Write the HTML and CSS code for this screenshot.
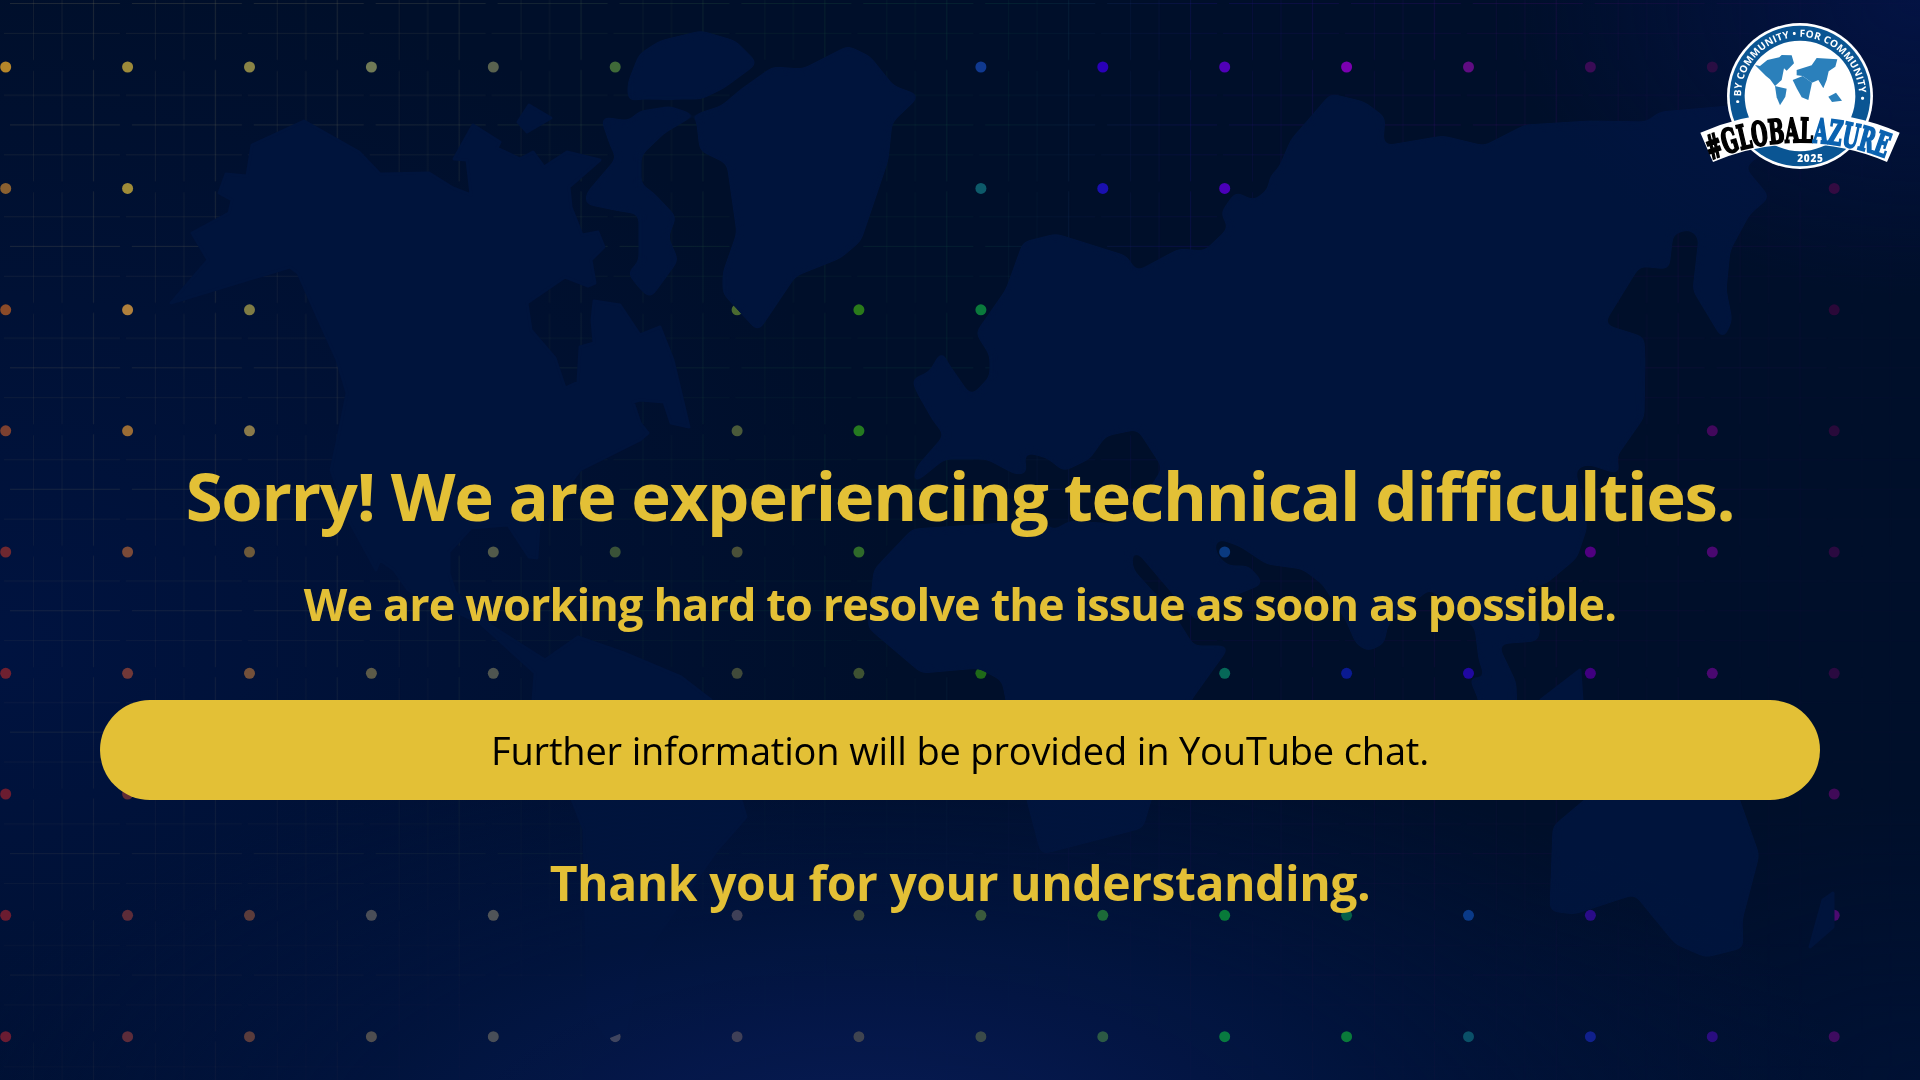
FILE: index.html
```html
<!DOCTYPE html>
<html lang="en">
<head>
<meta charset="utf-8">
<title>Technical difficulties</title>
<link rel="stylesheet" href="styles.css">
</head>
<body>
<main class="stage">
  <svg class="backdrop" viewBox="0 0 1920 1080" aria-hidden="true">
    <defs>
      <linearGradient id="gridTint" gradientUnits="userSpaceOnUse" x1="0" y1="0" x2="1920" y2="300">
        <stop offset="0" stop-color="#7d7a5c"/>
        <stop offset="0.2" stop-color="#6f6f5c"/>
        <stop offset="0.4" stop-color="#1d5a3c"/>
        <stop offset="0.52" stop-color="#0c5548"/>
        <stop offset="0.62" stop-color="#25109a"/>
        <stop offset="0.78" stop-color="#4d0a78"/>
        <stop offset="1" stop-color="#0a0a38"/>
      </linearGradient>
      <linearGradient id="gridFadeTint" gradientUnits="userSpaceOnUse" x1="0" y1="0" x2="0" y2="1080">
        <stop offset="0" stop-color="#fff"/>
        <stop offset="0.5" stop-color="#bbb"/>
        <stop offset="1" stop-color="#666"/>
      </linearGradient>
      <pattern id="gridTile" patternUnits="userSpaceOnUse" x="0" y="0" width="121.9" height="121.45">
        <g class="grid-lines">
          <path d="M33.5 0V60M33.5 71V121.45M62 0V60M62 71V121.45"/>
          <path class="strong" d="M93.5 0V60M93.5 70V121.45"/>
          <path d="M4 33.3H120M4 95.3H120"/>
          <path class="strong" d="M10 3.5H120"/>
        </g>
      </pattern>
      <mask id="gridMask" maskUnits="userSpaceOnUse" x="0" y="0" width="1920" height="1080">
        <rect width="1920" height="1080" fill="url(#gridTile)"/>
      </mask>
      <mask id="gridFade" maskUnits="userSpaceOnUse" x="0" y="0" width="1920" height="1080">
        <rect width="1920" height="1080" fill="url(#gridFadeTint)"/>
      </mask>
      <filter id="softCoast" x="0" y="0" width="1920" height="1080" filterUnits="userSpaceOnUse" color-interpolation-filters="sRGB">
        <feGaussianBlur stdDeviation="4"/>
        <feColorMatrix type="matrix" values="1 0 0 0 0  0 1 0 0 0  0 0 1 0 0  0 0 0 14 -6.5"/>
      </filter>
    </defs>

    <g mask="url(#gridFade)">
      <rect width="1920" height="1080" fill="url(#gridTint)" mask="url(#gridMask)"/>
    </g>

    <g class="dots">
      <circle cx="5.7" cy="67" fill="#b5862a"/><circle cx="127.6" cy="67" fill="#9c8a3a"/><circle cx="249.5" cy="67" fill="#8a8446"/><circle cx="371.4" cy="67" fill="#707a56"/><circle cx="493.3" cy="67" fill="#59624f"/><circle cx="615.2" cy="67" fill="#3f6a38"/><circle cx="980.9" cy="67" fill="#10398f"/><circle cx="1102.8" cy="67" fill="#2a00b8"/><circle cx="1224.7" cy="67" fill="#5000b8"/><circle cx="1346.6" cy="67" fill="#7a00b0"/><circle cx="1468.5" cy="67" fill="#5f0c82"/><circle cx="1590.4" cy="67" fill="#3a0a55"/><circle cx="1712.3" cy="67" fill="#2a0a40"/>

      <circle cx="5.7" cy="188.4" fill="#8a6030"/><circle cx="127.6" cy="188.4" fill="#a08c38"/><circle cx="737.1" cy="188.4" fill="#4a6a30"/><circle cx="980.9" cy="188.4" fill="#0d5a6a"/><circle cx="1102.8" cy="188.4" fill="#1a10b0"/><circle cx="1224.7" cy="188.4" fill="#4a00b8"/><circle cx="1834.2" cy="188.4" fill="#33083f"/>

      <circle cx="5.7" cy="309.8" fill="#8a4a28"/><circle cx="127.6" cy="309.8" fill="#b0803c"/><circle cx="249.5" cy="309.8" fill="#7f7c45"/><circle cx="737.1" cy="309.8" fill="#4a6a30"/><circle cx="858.9" cy="309.8" fill="#2a7a1a"/><circle cx="980.9" cy="309.8" fill="#0a7a3c"/><circle cx="1834.2" cy="309.8" fill="#2a0838"/>

      <circle cx="5.7" cy="430.8" fill="#7c4030"/><circle cx="127.6" cy="430.8" fill="#9a6c35"/><circle cx="249.5" cy="430.8" fill="#8a7a4a"/><circle cx="737.1" cy="430.8" fill="#4a5a3a"/><circle cx="858.9" cy="430.8" fill="#257a20"/><circle cx="1712.3" cy="430.8" fill="#42085c"/><circle cx="1834.2" cy="430.8" fill="#280a3a"/>

      <circle cx="5.7" cy="552" fill="#6f2830"/><circle cx="127.6" cy="552" fill="#7a4a38"/><circle cx="249.5" cy="552" fill="#6e5a3a"/><circle cx="371.4" cy="552" fill="#555a48"/><circle cx="493.3" cy="552" fill="#525a4a"/><circle cx="615.2" cy="552" fill="#3a5238"/><circle cx="737.1" cy="552" fill="#4a5038"/><circle cx="858.9" cy="552" fill="#2f6a2a"/><circle cx="1224.7" cy="552" fill="#0a3a80"/><circle cx="1590.4" cy="552" fill="#500080"/><circle cx="1712.3" cy="552" fill="#4a0870"/><circle cx="1834.2" cy="552" fill="#2a0a40"/>

      <circle cx="5.7" cy="673.3" fill="#6f2030"/><circle cx="127.6" cy="673.3" fill="#703838"/><circle cx="249.5" cy="673.3" fill="#73503a"/><circle cx="371.4" cy="673.3" fill="#5c5a48"/><circle cx="493.3" cy="673.3" fill="#4f5550"/><circle cx="737.1" cy="673.3" fill="#404a3a"/><circle cx="858.9" cy="673.3" fill="#3e5232"/><circle cx="980.9" cy="673.3" fill="#1f6a18"/><circle cx="1224.7" cy="673.3" fill="#066858"/><circle cx="1346.6" cy="673.3" fill="#0a1a90"/><circle cx="1468.5" cy="673.3" fill="#2008a0"/><circle cx="1590.4" cy="673.3" fill="#400080"/><circle cx="1712.3" cy="673.3" fill="#4a0870"/><circle cx="1834.2" cy="673.3" fill="#2a0a40"/>

      <circle cx="5.7" cy="794" fill="#6a1c30"/><circle cx="127.6" cy="794" fill="#602c35"/><circle cx="1834.2" cy="794" fill="#400a58"/>

      <circle cx="5.7" cy="915.3" fill="#6a1c30"/><circle cx="127.6" cy="915.3" fill="#5c2c38"/><circle cx="249.5" cy="915.3" fill="#5c3c3a"/><circle cx="371.4" cy="915.3" fill="#4a4e58"/><circle cx="493.3" cy="915.3" fill="#505458"/><circle cx="737.1" cy="915.3" fill="#3f4058"/><circle cx="858.9" cy="915.3" fill="#3e4a40"/><circle cx="980.9" cy="915.3" fill="#3a5a30"/><circle cx="1102.8" cy="915.3" fill="#1c6a20"/><circle cx="1224.7" cy="915.3" fill="#087a30"/><circle cx="1346.6" cy="915.3" fill="#06604a"/><circle cx="1468.5" cy="915.3" fill="#0a3a88"/><circle cx="1590.4" cy="915.3" fill="#2a0a88"/><circle cx="1834.2" cy="915.3" fill="#4a0870"/>

      <circle cx="5.7" cy="1036.7" fill="#6a1c30"/><circle cx="127.6" cy="1036.7" fill="#5c2c38"/><circle cx="249.5" cy="1036.7" fill="#5a3c3a"/><circle cx="371.4" cy="1036.7" fill="#4f4e50"/><circle cx="493.3" cy="1036.7" fill="#484e58"/><circle cx="615.2" cy="1036.7" fill="#3f4560"/><circle cx="737.1" cy="1036.7" fill="#3f4058"/><circle cx="858.9" cy="1036.7" fill="#3f4450"/><circle cx="980.9" cy="1036.7" fill="#3a4a40"/><circle cx="1102.8" cy="1036.7" fill="#2c5a2c"/><circle cx="1224.7" cy="1036.7" fill="#087a2a"/><circle cx="1346.6" cy="1036.7" fill="#0a7a20"/><circle cx="1468.5" cy="1036.7" fill="#0a5068"/><circle cx="1590.4" cy="1036.7" fill="#10208c"/><circle cx="1712.3" cy="1036.7" fill="#2a0880"/><circle cx="1834.2" cy="1036.7" fill="#3e0860"/>
    </g>

    <g class="land">
      <path d="M171 303L208 260L192 233L229 213L232 200L219 193L226 174L247 176L252 145L304 121L359 152L380 174L429 173L453 188L471 195L467 160L454 159L473 125L500 142L497 148L520 159L533 152L544 167L567 152L600 160L569 187L571 207L582 235L598 232L604 247L591 260L595 283L588 286L565 277L527 303L531 330L555 358L565 388L578 382L580 347L594 343L592 320L594 301L620 305L640 335L660 327L673 360L689 427L671 423L664 402L640 400L633 402L640 423L648 433L640 440L580 470L539 525L537 558L529 557L508 525L471 528L449 552L449 573L455 592L490 625L545 660L578 637L624 653L681 677L711 700L746 817L717 850L640 960L625 1030L608 1037L588 1010L584 830L533 700L535 673L480 623L408 590L394 570L380 560L376 570L369 557L347 517L331 470L339 433L347 393L337 360L322 327L298 273L290 267Z"/>
      <path d="M529 105L551 118L527 132L518 122Z"/>
      <g filter="url(#softCoast)">
        <path d="M640 55L660 42L701 32L735 42L756 63L722 88L701 98L640 98L629 100L629 83Z"/>
        <path d="M602 118L629 122L640 112L670 108L693 115L664 132L640 155L640 185L652 193L675 217L667 237L677 260L650 297L640 287L629 273L640 262L640 213L620 210L586 203L588 193L618 158L612 147Z"/>
        <path d="M697 115L722 107L742 90L773 68L803 70L848 47L869 57L893 87L918 96L891 122L887 160L860 240L840 257L795 275L758 330L724 293L724 273L738 233L728 163L701 150Z"/>
        <path d="M942 352L946 362L971 398L991 377L991 355L977 333L1007 290L1024 243L1056 235L1126 257L1136 273L1179 250L1205 252L1230 228L1222 213L1236 193L1254 202L1269 190L1271 177L1280 168L1292 140L1307 123L1331 95L1364 103L1384 118L1382 143L1384 147L1443 137L1484 147L1525 126L1590 122L1647 123L1660 113L1729 107L1780 100L1790 130L1743 167L1768 197L1749 213L1729 250L1725 290L1731 320L1723 338L1694 290L1700 237L1690 228L1672 233L1668 268L1639 265L1602 325L1643 338L1644 360L1643 417L1615 457L1619 473L1588 463L1574 468L1586 527L1576 557L1545 583L1519 587L1539 627L1537 640L1496 643L1515 683L1516 720L1480 720L1480 700L1470 677L1488 682L1480 660L1476 627L1430 587L1387 623L1383 643L1368 650L1357 643L1347 620L1323 583L1303 568L1267 563L1240 545L1217 537L1213 545L1217 557L1228 567L1248 567L1262 583L1220 600L1197 620L1177 597L1137 550L1130 550L1132 570L1150 590L1170 610L1187 637L1193 647L1228 647L1190 700L1150 800L1142 827L1042 853L1028 800L1007 700L1003 680L979 667L922 672L869 627L875 570L913 530L990 525L1040 520L1053 532L1070 522L1117 525L1137 510L1164 468L1138 428L1105 435L1089 458L1064 470L1048 457L1022 450L1026 473L1015 473L987 458L944 458L913 483L918 467L946 435L934 420L918 392L913 380L930 373Z"/>
        <path d="M1598 790L1554 827L1551 910L1574 913L1635 893L1676 943L1706 956L1742 947L1741 920L1758 855L1735 790Z"/>
      </g>
      <path d="M1541 700L1580 670L1582 700L1582 720L1541 720Z"/>
      <path d="M1833 893L1823 900L1810 947L1833 927Z"/>
    </g>
  </svg>

  <div class="glow"></div>

  <svg class="logo" viewBox="0 0 720 570" role="img" aria-label="Global Azure 2025">
    <defs>
      <path id="ringArc" d="M184.4 310A177 177 0 1 1 535.6 310"/>
      <path id="bannerArc" d="M92 480A707 707 0 0 1 632 480"/>
    </defs>
    <circle class="logo-rim" cx="360" cy="288" r="219"/>
    <circle class="logo-ring" cx="360" cy="288" r="211"/>
    <circle class="logo-face" cx="360" cy="288" r="166"/>
    <text class="logo-ring-text"><textPath href="#ringArc" textLength="590" lengthAdjust="spacing">• BY COMMUNITY • FOR COMMUNITY •</textPath></text>
    <g class="logo-map">
      <path d="M225 195L240 198L262 180L298 172L305 165L335 166L342 190L320 212L312 205L305 240L285 258L270 238L258 228Z"/>
      <path d="M285 258L320 266L316 290L300 316L290 292Z"/>
      <path d="M338 240L368 228L396 248L385 300L365 292L350 265Z"/>
      <path d="M350 210L395 196L410 174L472 178L466 200L446 214L440 240L430 265L415 240L396 248L368 228L350 226Z"/>
      <path d="M445 290L468 278L486 302L456 306Z"/>
    </g>
    <text class="logo-year" x="352" y="487">2025</text>
    <path class="logo-band" d="M80 442A707 707 0 0 1 640 442"/>
    <text class="logo-banner"><textPath href="#bannerArc" textLength="536" lengthAdjust="spacingAndGlyphs">#GLOBAL<tspan class="logo-azure">AZURE</tspan></textPath></text>
  </svg>

  <section class="notice">
    <h1 class="title">Sorry! We are experiencing technical difficulties.</h1>
    <h2 class="subtitle">We are working hard to resolve the issue as soon as possible.</h2>
    <p class="pill">Further information will be provided in YouTube chat.</p>
    <p class="thanks">Thank you for your understanding.</p>
  </section>
</main>
</body>
</html>
```
FILE: styles.css
```css
* { box-sizing: border-box; }
html, body { margin: 0; padding: 0; }
body { background: #000f2a; font-family: "Open Sans", "Noto Sans", "Liberation Sans", sans-serif; }

.stage {
  position: relative;
  width: 1920px;
  height: 1080px;
  overflow: hidden;
  background:
    radial-gradient(ellipse 900px 700px at 0% 60%, #001340 0%, rgba(0, 19, 64, 0) 100%),
    #000f2a;
}

.backdrop { position: absolute; inset: 0; width: 1920px; height: 1080px; }

.grid-lines path { fill: none; stroke: #fff; stroke-width: 1; stroke-opacity: 0.14; }
.grid-lines path.strong { stroke-opacity: 0.24; }

.dots circle { r: 5.5px; }

.land path { fill: #00143c; stroke: #00143c; stroke-width: 3; stroke-linejoin: round; }

.glow {
  position: absolute;
  inset: 0;
  mix-blend-mode: lighten;
  background:
    radial-gradient(ellipse 1000px 440px at 45% 106%, rgba(8, 28, 86, 0.98) 0%, rgba(1, 20, 62, 0.92) 52%, rgba(0, 18, 56, 0) 100%),
    radial-gradient(ellipse 420px 300px at 100% 0%, rgba(4, 20, 72, 0.85) 0%, rgba(4, 20, 72, 0) 100%),
    radial-gradient(ellipse 500px 300px at 100% 100%, rgba(0, 20, 62, 0.5) 0%, rgba(0, 20, 62, 0) 100%);
}

.logo { position: absolute; top: 0; right: 0; width: 240px; height: 190px; }
.logo-rim { fill: #fff; }
.logo-ring { fill: #0a5593; }
.logo-face { fill: #fff; }
.logo-ring-text { fill: #fff; font: 700 30px "Open Sans", sans-serif; }
.logo-map path { fill: #2b80bb; }
.logo-year { fill: #fff; font: 800 30px "Open Sans", sans-serif; letter-spacing: 2px; }
.logo-band { fill: none; stroke: #fff; stroke-width: 96px; }
.logo-banner {
  font: 700 100px "DejaVu Serif Condensed", "DejaVu Serif", serif;
  fill: #000;
  stroke: #000;
  stroke-width: 6px;
}
.logo-azure { fill: #0a62b0; stroke: #0a62b0; }

.notice {
  position: relative;
  display: flex;
  flex-direction: column;
  align-items: center;
  padding: 450px 100px 0;
  color: #e3c036;
}

.title {
  margin: 0;
  font-size: 67px;
  line-height: 90px;
  font-weight: 700;
  letter-spacing: -1.28px;
  white-space: nowrap;
}

.subtitle {
  margin: 34px 0 0;
  font-size: 45px;
  line-height: 60px;
  font-weight: 700;
  letter-spacing: -0.88px;
  white-space: nowrap;
}

.pill {
  display: flex;
  align-items: center;
  justify-content: center;
  width: 100%;
  height: 100px;
  margin: 66px 0 0;
  border-radius: 50px;
  background: #e3c036;
  color: #000;
  font-size: 38px;
  line-height: 50px;
  letter-spacing: -0.17px;
}

.thanks {
  margin: 48px 0 0;
  font-size: 48px;
  line-height: 70px;
  font-weight: 700;
  letter-spacing: -0.43px;
  white-space: nowrap;
}
```
